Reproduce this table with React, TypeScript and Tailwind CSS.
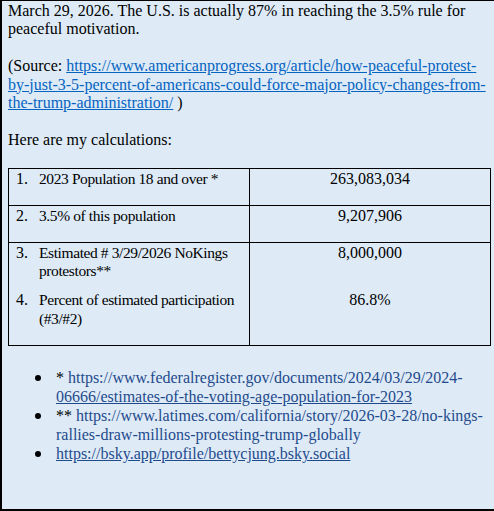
import React from "react";

const serif = { fontFamily: '"Liberation Serif", "Times New Roman", serif' };

function Item({ n, lines }: { n: string; lines: string[] }) {
  return (
    <div className="flex">
      <div className="w-[30px] pl-[7px] shrink-0">{n}</div>
      <div className="whitespace-nowrap text-[15.5px] tracking-[-0.4px]">
        {lines.map((l, i) => (
          <div key={i}>{l}</div>
        ))}
      </div>
    </div>
  );
}

export default function App() {
  return (
    <div
      style={serif}
      className="w-[494px] h-[511px] bg-[#deebf7] border-l-2 border-t border-b-2 border-black text-[16px] leading-[18.4px] text-black overflow-hidden box-border"
    >
      <div className="pl-[6px] pt-[1px] pr-[4px]">
        <p>March 29, 2026. The U.S. is actually 87% in reaching the 3.5% rule for</p>
        <p>peaceful motivation.</p>
        <p className="h-[18.4px]"></p>
        <p>
          (Source:{" "}
          <span className="text-[#0563c1] underline">
            https://www.americanprogress.org/article/how-peaceful-protest-
          </span>
        </p>
        <p>
          <span className="text-[#0563c1] underline">
            by-just-3-5-percent-of-americans-could-force-major-policy-changes-from-
          </span>
        </p>
        <p>
          <span className="text-[#0563c1] underline">the-trump-administration/</span> )
        </p>
        <p className="h-[18.4px]"></p>
        <p>Here are my calculations:</p>
        <p className="h-[18.4px]"></p>
      </div>
      <div className="pl-[6px]">
        <table className="border-collapse w-[483px] table-fixed">
          <tbody>
            <tr className="h-[37px]">
              <td className="border border-black align-top w-[241px] pt-[1px]">
                <Item n="1." lines={["2023 Population 18 and over *"]} />
              </td>
              <td className="border border-black align-top text-center pt-[1px]">263,083,034</td>
            </tr>
            <tr className="h-[37px]">
              <td className="border border-black align-top pt-[1px]">
                <Item n="2." lines={["3.5% of this population"]} />
              </td>
              <td className="border border-black align-top text-center pt-[1px]">9,207,906</td>
            </tr>
            <tr className="h-[103px]">
              <td className="border border-black align-top pt-[1px]">
                <Item n="3." lines={["Estimated # 3/29/2026 NoKings", "protestors**"]} />
                <div className="h-[11px]"></div>
                <Item n="4." lines={["Percent of estimated participation", "(#3/#2)"]} />
              </td>
              <td className="border border-black align-top text-center pt-[1px]">
                <div>8,000,000</div>
                <div className="h-[29.4px]"></div>
                <div>86.8%</div>
              </td>
            </tr>
          </tbody>
        </table>
      </div>
      <ul className="mt-[22px] pl-[54px] pr-[4px] text-[#1f4a8c] leading-[19.2px]">
        {[
          [
            <>
              <span className="text-black">*</span> https://www.federalregister.gov/documents/2024/03/29/2024-
            </>,
            <span className="underline">06666/estimates-of-the-voting-age-population-for-2023</span>,
          ],
          [
            <>
              <span className="text-black">**</span> https://www.latimes.com/california/story/2026-03-28/no-kings-
            </>,
            <>rallies-draw-millions-protesting-trump-globally</>,
          ],
          [<span className="underline">https://bsky.app/profile/bettycjung.bsky.social</span>],
        ].map((lines, i) => (
          <li key={i} className="relative">
            <span className="absolute left-[-21px] top-[7px] w-[6px] h-[6px] rounded-full bg-black"></span>
            {lines.map((l, j) => (
              <div key={j} className="whitespace-nowrap">
                {l}
              </div>
            ))}
          </li>
        ))}
      </ul>
    </div>
  );
}
